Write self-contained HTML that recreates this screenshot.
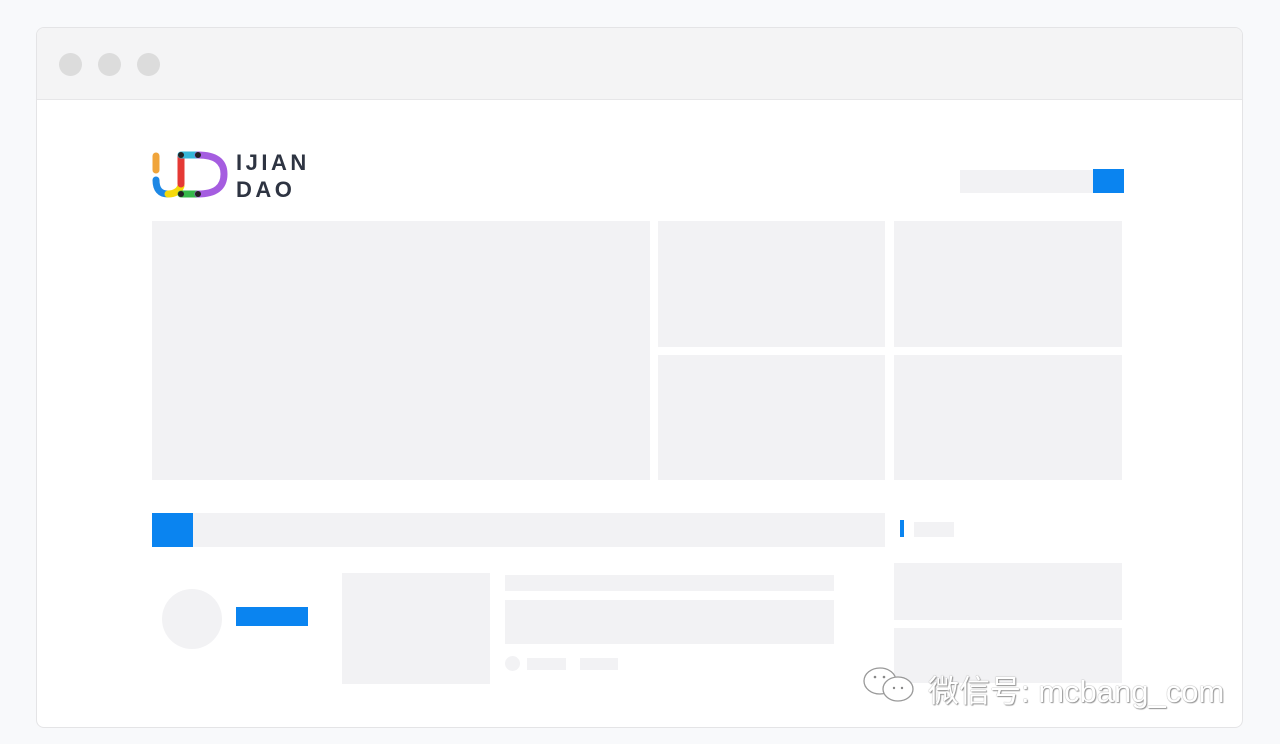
<!DOCTYPE html>
<html><head><meta charset="utf-8"><style>
*{margin:0;padding:0;box-sizing:border-box}
body{width:1280px;height:744px;background:#f8f9fb;position:relative;overflow:hidden;font-family:"Liberation Sans",sans-serif}
.win{position:absolute;left:36px;top:27px;width:1207px;height:701px;background:#fff;border:1px solid #e4e4e6;border-radius:8px;overflow:hidden}
.bar{position:absolute;left:0;top:0;right:0;height:72px;background:#f4f4f5;border-bottom:1px solid #e6e6e8}
.dot{position:absolute;top:25px;width:23px;height:23px;border-radius:50%;background:#dcdcdc}
.g{position:absolute;background:#f2f2f4}
.b{position:absolute;background:#0a84f0}
.wm{position:absolute;left:928px;top:666px;font-family:"Liberation Sans","Noto Sans CJK SC",sans-serif;font-size:31px;color:#fff;text-shadow:0 0 1px #777,1px 1px 1px #999}
</style></head><body>
<div class="win">
<div class="bar"><div class="dot" style="left:22px"></div><div class="dot" style="left:61px"></div><div class="dot" style="left:100px"></div></div>
</div>
<svg style="position:absolute;left:150px;top:150px" width="80" height="52" viewBox="0 0 80 52">
<g fill="none" stroke-width="7" stroke-linecap="round">
<line x1="6" y1="6" x2="6" y2="20" stroke="#f0a43a"/>
<path d="M6 30 Q6 44 18 44" stroke="#1e88e5"/>
<path d="M18 44 Q28 44 31 36" stroke="#f5d90a"/>
<line x1="31" y1="6" x2="31" y2="34" stroke="#e53935"/>
<line x1="31" y1="5" x2="48" y2="5" stroke="#35b6d8"/>
<line x1="31" y1="44" x2="48" y2="44" stroke="#35b84a"/>
<path d="M48 5 Q74 5 74 24 Q74 44 48 44" stroke="#a55de0"/>
</g>
<g fill="#222"><circle cx="31" cy="5" r="3"/><circle cx="48" cy="5" r="3"/><circle cx="48" cy="44" r="3"/><circle cx="31" cy="44" r="3"/></g>
</svg>
<div style="position:absolute;left:236px;top:149px;font-weight:900;font-size:22px;line-height:27px;color:#2e3442;letter-spacing:3.5px">IJIAN<br>DAO</div>
<div class="g" style="left:960px;top:170px;width:134px;height:23px"></div>
<div class="b" style="left:1093px;top:169px;width:31px;height:24px"></div>
<div class="g" style="left:152px;top:221px;width:498px;height:259px"></div>
<div class="g" style="left:658px;top:221px;width:227px;height:126px"></div>
<div class="g" style="left:894px;top:221px;width:228px;height:126px"></div>
<div class="g" style="left:658px;top:355px;width:227px;height:125px"></div>
<div class="g" style="left:894px;top:355px;width:228px;height:125px"></div>
<div class="g" style="left:152px;top:513px;width:733px;height:34px"></div>
<div class="b" style="left:152px;top:513px;width:41px;height:34px"></div>
<div class="b" style="left:900px;top:520px;width:4px;height:17px"></div>
<div class="g" style="left:914px;top:522px;width:40px;height:15px"></div>
<div class="g" style="left:894px;top:563px;width:228px;height:57px"></div>
<div class="g" style="left:894px;top:628px;width:228px;height:55px"></div>
<div class="g" style="left:162px;top:589px;width:60px;height:60px;border-radius:50%"></div>
<div class="b" style="left:236px;top:607px;width:72px;height:19px"></div>
<div class="g" style="left:342px;top:573px;width:148px;height:111px"></div>
<div class="g" style="left:505px;top:575px;width:329px;height:16px"></div>
<div class="g" style="left:505px;top:600px;width:329px;height:44px"></div>
<div class="g" style="left:505px;top:656px;width:15px;height:15px;border-radius:50%"></div>
<div class="g" style="left:527px;top:658px;width:39px;height:12px"></div>
<div class="g" style="left:580px;top:658px;width:38px;height:12px"></div>
<svg style="position:absolute;left:862px;top:665px" width="60" height="42" viewBox="0 0 60 42">
<g fill="#fff" stroke="#999" stroke-width="1.3">
<ellipse cx="18" cy="16" rx="16" ry="13"/>
<ellipse cx="36" cy="24" rx="15" ry="12"/>
</g>
<g fill="#888"><circle cx="13" cy="12" r="1.3"/><circle cx="22" cy="12" r="1.3"/><circle cx="32" cy="23" r="1.2"/><circle cx="40" cy="23" r="1.2"/></g>
</svg>
<div class="wm">微信号: mcbang_com</div>
</body></html>
